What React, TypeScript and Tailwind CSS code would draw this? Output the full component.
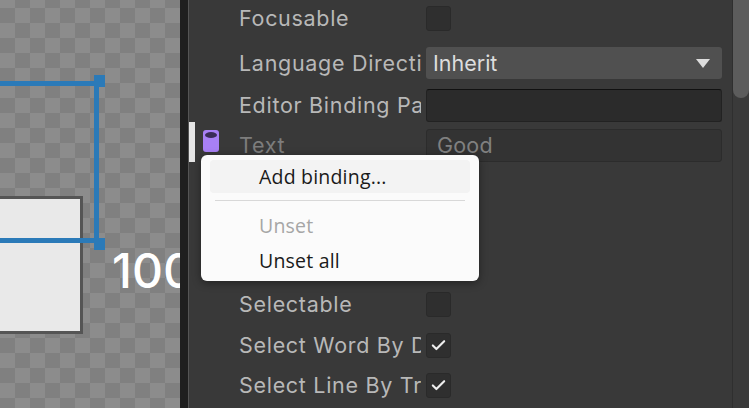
import React from 'react';
import { Check } from 'lucide-react';

const Checkbox = ({ checked }: { checked?: boolean }) => (
  <div className="flex h-[25px] w-[25px] items-center justify-center rounded-[3px] border border-[#2a2a2a] bg-[#2f2f2f]">
    {checked && <Check size={17} strokeWidth={3} className="text-[#eeeeee]" />}
  </div>
);

const Row = ({ label, height, muted, children }: { label: string; height: string; muted?: boolean; children: React.ReactNode }) => (
  <div className={`flex items-center ${height}`}>
    <div className={`w-[182px] overflow-hidden whitespace-nowrap text-[21.5px] tracking-[0.7px] ${muted ? 'text-[#7d7d7d]' : 'text-[#b8b8b8]'}`}>
      {label}
    </div>
    <div className="ml-[5px] w-[296px]">{children}</div>
  </div>
);

export default function App() {
  return (
    <div className="flex h-[408px] w-[749px] overflow-hidden bg-[#393939] font-['Inter',sans-serif]">
      {/* canvas */}
      <div className="relative h-full w-[180px] shrink-0 overflow-hidden bg-[conic-gradient(#808080_25%,#8c8c8c_0_50%,#808080_0_75%,#8c8c8c_0)] bg-[length:30px_30px] bg-[position:15px_8px]">
        <div className="absolute left-[-10px] top-[196px] h-[138px] w-[93px] border-[3px] border-[#555555] bg-[#e9e9e9]" />
        <div className="absolute left-[-10px] top-[81px] h-[162px] w-[109px] border-b-[5px] border-r-[5px] border-t-[5px] border-[#2b7ab8]" />
        <div className="absolute left-[94px] top-[75px] h-[12px] w-[11px] bg-[#2b7ab8]" />
        <div className="absolute left-[94px] top-[238px] h-[12px] w-[11px] bg-[#2b7ab8]" />
        <div className="absolute left-[112px] top-[244px] text-[48px] font-medium leading-[54px] text-white">100</div>
      </div>

      {/* divider */}
      <div className="h-full w-[9px] shrink-0 border-r border-[#555555] bg-[#1f1f1f]" />

      {/* inspector */}
      <div className="relative flex-1">
        <div className="pl-[50px]">
          <Row label="Focusable" height="h-[37px]">
            <Checkbox />
          </Row>
          <div className="h-[7px]" />
          <Row label="Language Directi" height="h-[38px]">
            <div className="flex h-[32px] items-center justify-between rounded-[3px] bg-[#505050] pl-[7px] pr-[12px] text-[21.5px] text-[#dddddd]">
              <span>Inherit</span>
              <svg width="14" height="9" viewBox="0 0 14 9"><path d="M0 0h14L7 9z" fill="#dddddd" /></svg>
            </div>
          </Row>
          <Row label="Editor Binding Pa" height="h-[46px]">
            <div className="h-[33px] rounded-[3px] border border-[#222222] border-t-[#111111] bg-[#2b2b2b]" />
          </Row>
          <Row label="Text" height="h-[34px]" muted>
            <div className="flex h-[33px] items-center rounded-[3px] border border-[#2c2c2c] bg-[#333333] pl-[10px] text-[21.5px] tracking-[0.2px] text-[#808080]">Good</div>
          </Row>
          <div className="h-[121px]" />
          <Row label="Selectable" height="h-[42px]">
            <Checkbox />
          </Row>
          <Row label="Select Word By D" height="h-[40px]">
            <Checkbox checked />
          </Row>
          <Row label="Select Line By Tr" height="h-[41px]">
            <Checkbox checked />
          </Row>
        </div>

        {/* binding marker */}
        <div className="absolute left-0 top-[122px] h-[40px] w-[6px] bg-[#e6e6e6]" />
        <svg className="absolute left-[13px] top-[129px]" width="18" height="24" viewBox="0 0 18 24">
          <path d="M1 4a3 3 0 0 1 3-3h10a3 3 0 0 1 3 3v16a3 3 0 0 1-3 3H4a3 3 0 0 1-3-3z" fill="#a880f5" />
          <ellipse cx="9" cy="6" rx="6" ry="3" fill="#3a2c58" />
        </svg>

        {/* context menu */}
        <div className="absolute left-[12px] top-[155px] h-[126px] w-[278px] rounded-[6px] bg-[#fbfbfb] font-['Open_Sans',sans-serif] text-[19.5px] tracking-[0.2px] text-[#1a1a1a] shadow-[0_2px_8px_rgba(0,0,0,0.4)]">
          <div className="mx-[9px] mt-[5px] flex h-[33px] items-center rounded-[4px] bg-[#f3f3f3] pl-[49px]">Add binding...</div>
          <div className="mx-[14px] mt-[7px] h-px bg-[#d8d8d8]" />
          <div className="mt-[7px] flex h-[35px] items-center pl-[58px] text-[#a6a6a6]">Unset</div>
          <div className="flex h-[35px] items-center pl-[58px]">Unset all</div>
        </div>

        {/* scrollbar */}
        <div className="absolute right-0 top-0 h-full w-[17px] border-l border-[#2f2f2f] bg-[#3a3a3a]">
          <div className="h-[98px] rounded-b-[8px] bg-[#5c5c5c]" />
        </div>
      </div>
    </div>
  );
}
